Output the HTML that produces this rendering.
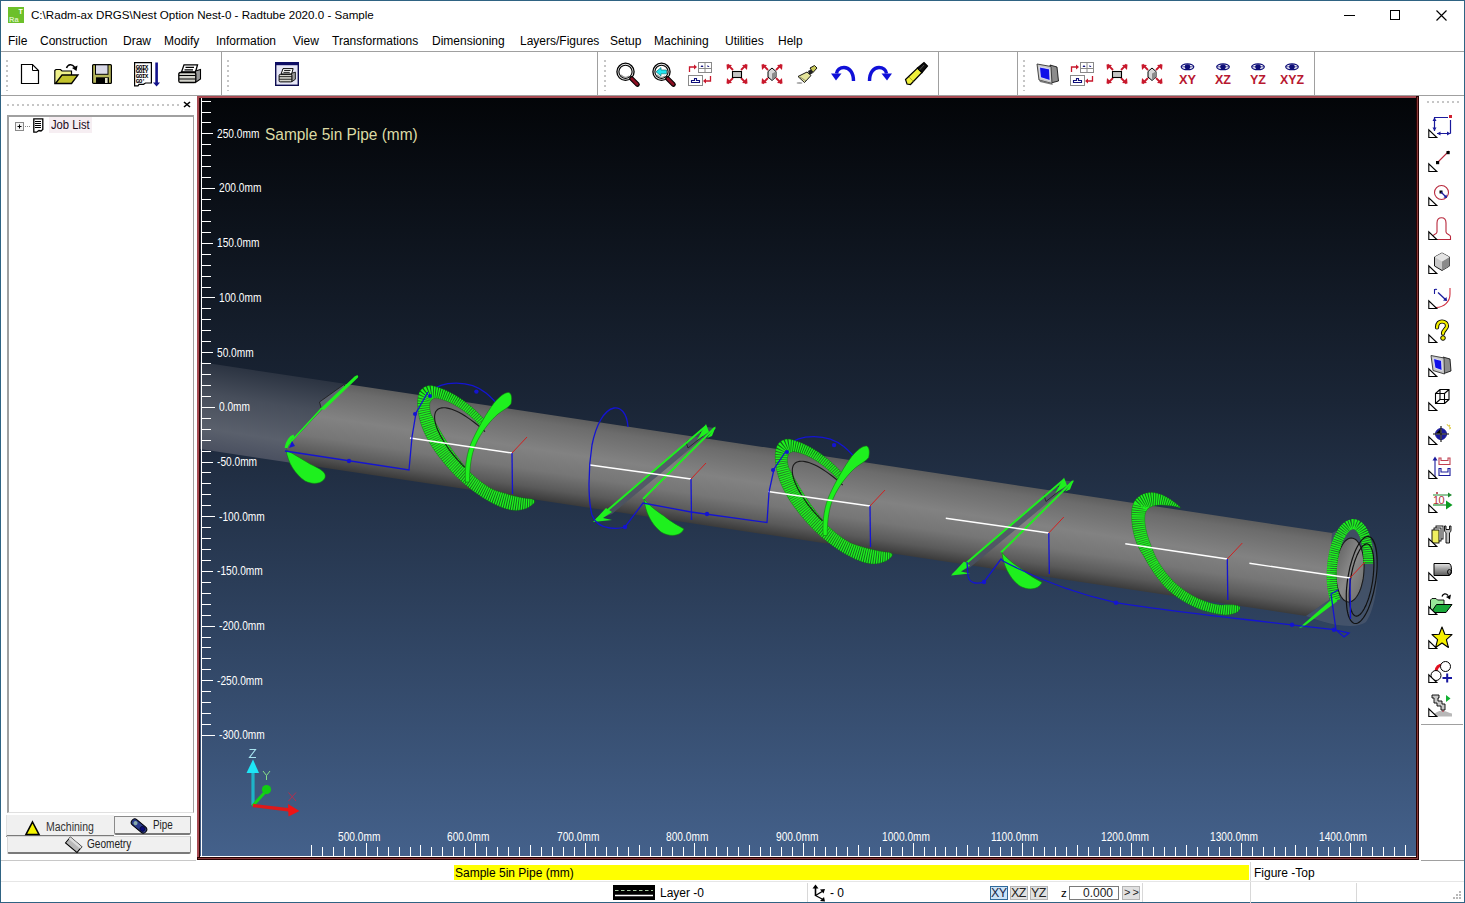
<!DOCTYPE html>
<html><head><meta charset="utf-8">
<style>
*{margin:0;padding:0;box-sizing:border-box}
html,body{width:1465px;height:903px;overflow:hidden;background:#fff;font-family:"Liberation Sans",sans-serif;color:#000}
.a{position:absolute}
.t{position:absolute;white-space:pre;font-size:12px;line-height:14px}
.hl{position:absolute;height:1px;background:#a0a0a0}
.vl{position:absolute;width:1px;background:#a0a0a0}
.grip{position:absolute;width:2px;background:repeating-linear-gradient(#c6c6c6 0 2px,transparent 2px 5px)}
.griph{position:absolute;height:2px;background:repeating-linear-gradient(90deg,#c6c6c6 0 2px,transparent 2px 5px)}
.rl{position:absolute;font-size:12.4px;line-height:13px;color:#fff;white-space:pre;transform-origin:0 0;transform:scaleX(0.82)}
svg{overflow:visible}
</style></head><body>
<div class="a" style="left:0;top:0;width:1465px;height:903px;border:1px solid #2f6383;"></div>

<!-- title bar -->
<svg class="a" style="left:8px;top:7px" width="16" height="16"><rect width="16" height="16" fill="#6cc02a"/><text x="1" y="15" font-family="Liberation Sans" font-size="7.5" font-weight="bold" fill="#d8f0c0">Ra</text><text x="10.5" y="7" font-family="Liberation Sans" font-size="7" font-weight="bold" fill="#fff">T</text></svg>
<div class="t" style="left:31px;top:8px;font-size:11.6px;color:#000">C:\Radm-ax DRGS\Nest Option Nest-0 - Radtube 2020.0 - Sample</div>
<div class="a" style="left:1344px;top:15px;width:11px;height:1px;background:#000"></div>
<div class="a" style="left:1390px;top:10px;width:10px;height:10px;border:1px solid #000"></div>
<svg class="a" style="left:1436px;top:10px" width="11" height="11"><path d="M0.5 0.5L10.5 10.5M10.5 0.5L0.5 10.5" stroke="#000" stroke-width="1.15"/></svg>

<!-- menu -->
<div class="t" style="left:8px;top:34px">File</div>
<div class="t" style="left:40px;top:34px">Construction</div>
<div class="t" style="left:123px;top:34px">Draw</div>
<div class="t" style="left:164px;top:34px">Modify</div>
<div class="t" style="left:216px;top:34px">Information</div>
<div class="t" style="left:293px;top:34px">View</div>
<div class="t" style="left:332px;top:34px">Transformations</div>
<div class="t" style="left:432px;top:34px">Dimensioning</div>
<div class="t" style="left:520px;top:34px">Layers/Figures</div>
<div class="t" style="left:610px;top:34px">Setup</div>
<div class="t" style="left:654px;top:34px">Machining</div>
<div class="t" style="left:725px;top:34px">Utilities</div>
<div class="t" style="left:778px;top:34px">Help</div>
<div class="hl" style="left:1px;top:51px;width:1463px"></div>

<!-- toolbar -->
<div class="hl" style="left:1px;top:95px;width:1463px"></div>
<div class="vl" style="left:221px;top:52px;height:43px"></div>
<div class="vl" style="left:597px;top:52px;height:43px"></div>
<div class="vl" style="left:938px;top:52px;height:43px"></div>
<div class="vl" style="left:1017px;top:52px;height:43px"></div>
<div class="vl" style="left:1314px;top:52px;height:43px"></div>
<div class="grip" style="left:6px;top:60px;height:31px"></div>
<div class="grip" style="left:227px;top:60px;height:31px"></div>
<div class="grip" style="left:604px;top:60px;height:31px"></div>
<div class="grip" style="left:1023px;top:60px;height:31px"></div>
<svg class="a" style="left:21px;top:64px" width="18" height="20" viewBox="0 0 18 20"><path d="M0.5,0.5H11.5L17.5,6.5V19.5H0.5Z" fill="#fff" stroke="#000" stroke-width="1.2"/><path d="M11.5,0.5V6.5H17.5" fill="none" stroke="#000" stroke-width="1"/></svg>
<svg class="a" style="left:54px;top:63px" width="25" height="21" viewBox="0 0 25 21"><path d="M0.8,7.5 L2,6.5 H6.5 L8,8 H17.5 V20.3 H0.8 Z" fill="#eef08a" stroke="#000" stroke-width="1.2"/><path d="M1.5,20.5 L8,12 H24 L17.5,20.5 Z" fill="#c2c22c" stroke="#000" stroke-width="1.3"/><path d="M12.5,5 C14,1 18,0.5 20.5,4" fill="none" stroke="#000" stroke-width="1.5"/><polygon points="18,5 23.5,2.5 22.5,8" fill="#000"/></svg>
<svg class="a" style="left:92px;top:64px" width="20" height="20" viewBox="0 0 20 20"><rect x="0.6" y="0.6" width="18.8" height="18.8" rx="1" fill="#b6b65c" stroke="#000" stroke-width="1.2"/><rect x="3.5" y="0.8" width="12.5" height="9.5" fill="#d9d9e8" stroke="#000" stroke-width="1"/><rect x="4" y="13.3" width="13" height="6.2" fill="#000"/><rect x="13" y="14" width="2.6" height="5" fill="#e6e6d0"/></svg>
<svg class="a" style="left:134px;top:62px" width="27" height="25" viewBox="0 0 27 25"><path d="M0.6,0.6H17.4V21H11.5L9.5,22.3H5L4,23.8H0.6Z" fill="#fff" stroke="#000" stroke-width="1.2"/><text x="1.8" y="6.5" font-family="Liberation Mono" font-weight="bold" font-size="6" letter-spacing="-0.6">GOIX</text><text x="1.8" y="11.3" font-family="Liberation Mono" font-weight="bold" font-size="6" letter-spacing="-0.6">GOIY</text><text x="1.8" y="16.1" font-family="Liberation Mono" font-weight="bold" font-size="6" letter-spacing="-0.6">GOIX</text><text x="1.8" y="20.9" font-family="Liberation Mono" font-weight="bold" font-size="6" letter-spacing="-0.6">GO'</text><rect x="21.3" y="0.5" width="2.6" height="20.5" fill="#12128c"/><polygon points="19,20.5 26,20.5 22.6,24.5" fill="#12128c"/></svg>
<svg class="a" style="left:178px;top:64px" width="23" height="19" viewBox="0 0 23 19"><g transform="translate(0,0)"><polygon points="6,0.8 19.5,0.8 17.5,8 3.5,8" fill="#fff" stroke="#000" stroke-width="1.3"/><path d="M7.5,3.3H16M6.5,5.8H15" stroke="#000" stroke-width="1.2"/><polygon points="17.5,7 22.5,5.5 22.5,15 17.5,18.5" fill="#9a9a9a" stroke="#000" stroke-width="1.1"/><rect x="0.8" y="8.5" width="17" height="10" rx="1.5" fill="#d4d4cc" stroke="#000" stroke-width="1.3"/><path d="M1,11.5H17.5M1,15H17.5" stroke="#000" stroke-width="1.1"/></g></svg>
<svg class="a" style="left:275px;top:62px" width="24" height="24" viewBox="0 0 24 24"><rect x="0.7" y="0.7" width="22.6" height="22.6" fill="#e6e6f6" stroke="#0c0c50" stroke-width="1.4"/><rect x="0" y="0" width="24" height="3.2" fill="#0c0c64"/><g transform="translate(3.5,6) scale(0.75)"><g transform="translate(0,0)"><polygon points="6,0.8 19.5,0.8 17.5,8 3.5,8" fill="#fff" stroke="#000" stroke-width="1.3"/><path d="M7.5,3.3H16M6.5,5.8H15" stroke="#000" stroke-width="1.2"/><polygon points="17.5,7 22.5,5.5 22.5,15 17.5,18.5" fill="#9a9a9a" stroke="#000" stroke-width="1.1"/><rect x="0.8" y="8.5" width="17" height="10" rx="1.5" fill="#d4d4cc" stroke="#000" stroke-width="1.3"/><path d="M1,11.5H17.5M1,15H17.5" stroke="#000" stroke-width="1.1"/></g></g></svg>
<svg class="a" style="left:615px;top:62px" width="25" height="25" viewBox="0 0 25 25"><circle cx="10.5" cy="9.8" r="8.6" fill="#e8e8e8" stroke="#000" stroke-width="1.3"/><circle cx="10.5" cy="9.8" r="6.6" fill="#fff" stroke="#000" stroke-width="1.1"/><path d="M6,13 A6,6 0 0 0 14,14" stroke="#999" stroke-width="1.2" fill="none"/><path d="M16.5,16.5 L22.5,22.5" stroke="#000" stroke-width="4.6" stroke-linecap="round"/><path d="M16.8,16.8 L22.2,22.2" stroke="#8a0f22" stroke-width="2.8" stroke-linecap="round"/></svg>
<svg class="a" style="left:651px;top:62px" width="25" height="25" viewBox="0 0 25 25"><circle cx="10.5" cy="9.8" r="8.6" fill="#e8e8e8" stroke="#000" stroke-width="1.3"/><circle cx="10.5" cy="9.8" r="6.6" fill="#fff" stroke="#000" stroke-width="1.1"/><path d="M6,13 A6,6 0 0 0 14,14" stroke="#999" stroke-width="1.2" fill="none"/><path d="M16.5,16.5 L22.5,22.5" stroke="#000" stroke-width="4.6" stroke-linecap="round"/><path d="M16.8,16.8 L22.2,22.2" stroke="#8a0f22" stroke-width="2.8" stroke-linecap="round"/><polygon points="5,9.8 10,5.5 10,8 15.5,8 15.5,11.8 10,11.8 10,14" fill="#22e4f0" stroke="#066" stroke-width="0.6"/></svg>
<svg class="a" style="left:688px;top:62px" width="25" height="24" viewBox="0 0 25 24"><rect x="10.5" y="0.5" width="13" height="10" fill="#fff" stroke="#8a8a8a" stroke-width="1"/><path d="M17,0.5V10.5M10.5,6.5H23.5" stroke="#8a8a8a" stroke-width="1"/><polygon points="12.5,5 14,3 15.5,5" fill="#10107a"/><polygon points="19.5,3 21.5,5 19.5,5" fill="#10107a"/><rect x="0.5" y="13.5" width="14" height="10" fill="#fff" stroke="#8a8a8a" stroke-width="1"/><path d="M3.5,20.5H11.5V18.5H8.5V16.5H6.5V18.5H3.5Z" fill="none" stroke="#10107a" stroke-width="1.1"/><path d="M1.5,10V5H6.5" fill="none" stroke="#c8182c" stroke-width="1.3"/><polygon points="6,2.5 9,5 6,7.5" fill="#c8182c"/><path d="M22.5,14V19H17.5" fill="none" stroke="#c8182c" stroke-width="1.3"/><polygon points="18,16.5 15,19 18,21.5" fill="#c8182c"/></svg>
<svg class="a" style="left:726px;top:64px" width="22" height="20" viewBox="0 0 22 20"><path d="M7,6 L1.5,0.5" stroke="#c8182c" stroke-width="1.8"/><path d="M15,6 L20.5,0.5" stroke="#c8182c" stroke-width="1.8"/><path d="M7,14 L1.5,19.5" stroke="#c8182c" stroke-width="1.8"/><path d="M15,14 L20.5,19.5" stroke="#c8182c" stroke-width="1.8"/><polygon points="0.5,0.5 6,1 1,6" fill="#c8182c"/><polygon points="21.5,0.5 16,1 21,6" fill="#c8182c"/><polygon points="0.5,19.5 6,19 1,14" fill="#c8182c"/><polygon points="21.5,19.5 16,19 21,14" fill="#c8182c"/><rect x="6.5" y="7.5" width="9" height="6" fill="#c4c4c4" stroke="#000" stroke-width="1.1"/></svg>
<svg class="a" style="left:761px;top:64px" width="22" height="20" viewBox="0 0 22 20"><path d="M7,6 L1.5,0.5" stroke="#c8182c" stroke-width="1.8"/><path d="M15,6 L20.5,0.5" stroke="#c8182c" stroke-width="1.8"/><path d="M7,14 L1.5,19.5" stroke="#c8182c" stroke-width="1.8"/><path d="M15,14 L20.5,19.5" stroke="#c8182c" stroke-width="1.8"/><polygon points="0.5,0.5 6,1 1,6" fill="#c8182c"/><polygon points="21.5,0.5 16,1 21,6" fill="#c8182c"/><polygon points="0.5,19.5 6,19 1,14" fill="#c8182c"/><polygon points="21.5,19.5 16,19 21,14" fill="#c8182c"/><polygon points="11,4 15,7.5 15,13 11,16.5 7,13 7,7.5" fill="#d8d8d8" stroke="#000" stroke-width="1"/><polygon points="11,9.5 15,7.5 15,13 11,16.5" fill="#8c8c8c"/></svg>
<svg class="a" style="left:796px;top:65px" width="22" height="19" viewBox="0 0 22 19"><ellipse cx="3.5" cy="18" rx="3" ry="1" fill="#aaa"/><polygon points="14,3 18.5,0.5 21,3 17,7.5" fill="#c8c858" stroke="#000" stroke-width="0.9"/><polygon points="12,6 15,4.5 17,8 13.5,10" fill="#222"/><polygon points="2,11.5 11,7 15,10.5 8.5,17.5" fill="#e4e49a" stroke="#000" stroke-width="0.9"/><path d="M4,12 L10,16" stroke="#555" stroke-width="0.6"/></svg>
<svg class="a" style="left:831px;top:65px" width="25" height="17" viewBox="0 0 25 17"><path d="M22.5,16 C22.5,7 18,2.5 13,2.5 C9,2.5 6,5 5.5,8.5" fill="none" stroke="#1010d8" stroke-width="3.4"/><polygon points="0,8.5 10.5,8.5 5,15.5" fill="#1010d8"/></svg>
<svg class="a" style="left:867px;top:65px" width="25" height="17" viewBox="0 0 25 17"><g transform="translate(25,0) scale(-1,1)"><path d="M22.5,16 C22.5,7 18,2.5 13,2.5 C9,2.5 6,5 5.5,8.5" fill="none" stroke="#1010d8" stroke-width="3.4"/><polygon points="0,8.5 10.5,8.5 5,15.5" fill="#1010d8"/></g></svg>
<svg class="a" style="left:905px;top:62px" width="23" height="24" viewBox="0 0 23 24"><polygon points="0.5,17.5 12.5,6 17,10.5 5.5,22.5 2,22" fill="#f0f03a" stroke="#000" stroke-width="1.2"/><polygon points="12.5,6 19,0.5 22.5,4 17,10.5" fill="#111" stroke="#000" stroke-width="1.2"/><path d="M19,3 L14.5,8" stroke="#888" stroke-width="0.5"/><path d="M4,15 L8.5,19.5" stroke="#8a8a20" stroke-width="0.6"/></svg>
<svg class="a" style="left:1036px;top:62px" width="24" height="24" viewBox="0 0 24 24"><polygon points="14,3 21,5 22.5,19 15,21" fill="#8c8c8c" stroke="#000" stroke-width="0.8"/><polygon points="1,2 15,4.5 16,21.5 3,18" fill="#c8c8c8" stroke="#333" stroke-width="0.9"/><polygon points="3.5,5 13.5,7 14,18.5 4.5,15.5" fill="#1010e8" stroke="#fff" stroke-width="0.7"/><polygon points="3,18 16,21.5 17,23 4,20" fill="#777"/></svg>
<svg class="a" style="left:1070px;top:62px" width="25" height="24" viewBox="0 0 25 24"><rect x="10.5" y="0.5" width="13" height="10" fill="#fff" stroke="#8a8a8a" stroke-width="1"/><path d="M17,0.5V10.5M10.5,6.5H23.5" stroke="#8a8a8a" stroke-width="1"/><polygon points="12.5,5 14,3 15.5,5" fill="#10107a"/><polygon points="19.5,3 21.5,5 19.5,5" fill="#10107a"/><rect x="0.5" y="13.5" width="14" height="10" fill="#fff" stroke="#8a8a8a" stroke-width="1"/><path d="M3.5,20.5H11.5V18.5H8.5V16.5H6.5V18.5H3.5Z" fill="none" stroke="#10107a" stroke-width="1.1"/><path d="M1.5,10V5H6.5" fill="none" stroke="#c8182c" stroke-width="1.3"/><polygon points="6,2.5 9,5 6,7.5" fill="#c8182c"/><path d="M22.5,14V19H17.5" fill="none" stroke="#c8182c" stroke-width="1.3"/><polygon points="18,16.5 15,19 18,21.5" fill="#c8182c"/></svg>
<svg class="a" style="left:1106px;top:64px" width="22" height="20" viewBox="0 0 22 20"><path d="M7,6 L1.5,0.5" stroke="#c8182c" stroke-width="1.8"/><path d="M15,6 L20.5,0.5" stroke="#c8182c" stroke-width="1.8"/><path d="M7,14 L1.5,19.5" stroke="#c8182c" stroke-width="1.8"/><path d="M15,14 L20.5,19.5" stroke="#c8182c" stroke-width="1.8"/><polygon points="0.5,0.5 6,1 1,6" fill="#c8182c"/><polygon points="21.5,0.5 16,1 21,6" fill="#c8182c"/><polygon points="0.5,19.5 6,19 1,14" fill="#c8182c"/><polygon points="21.5,19.5 16,19 21,14" fill="#c8182c"/><rect x="6.5" y="7.5" width="9" height="6" fill="#c4c4c4" stroke="#000" stroke-width="1.1"/></svg>
<svg class="a" style="left:1141px;top:64px" width="22" height="20" viewBox="0 0 22 20"><path d="M7,6 L1.5,0.5" stroke="#c8182c" stroke-width="1.8"/><path d="M15,6 L20.5,0.5" stroke="#c8182c" stroke-width="1.8"/><path d="M7,14 L1.5,19.5" stroke="#c8182c" stroke-width="1.8"/><path d="M15,14 L20.5,19.5" stroke="#c8182c" stroke-width="1.8"/><polygon points="0.5,0.5 6,1 1,6" fill="#c8182c"/><polygon points="21.5,0.5 16,1 21,6" fill="#c8182c"/><polygon points="0.5,19.5 6,19 1,14" fill="#c8182c"/><polygon points="21.5,19.5 16,19 21,14" fill="#c8182c"/><polygon points="11,4 15,7.5 15,13 11,16.5 7,13 7,7.5" fill="#d8d8d8" stroke="#000" stroke-width="1"/><polygon points="11,9.5 15,7.5 15,13 11,16.5" fill="#8c8c8c"/></svg>
<svg class="a" style="left:1179px;top:63px" width="17" height="21" viewBox="0 0 17 21"><g transform="translate(0.0,0)"><ellipse cx="8.5" cy="3.8" rx="6.3" ry="2.9" fill="#fff" stroke="#0e0e78" stroke-width="1.2"/><ellipse cx="8.5" cy="3.8" rx="2.8" ry="2.6" fill="#0e0e78"/><path d="M2.2,3.8H14.8" stroke="#0e0e78" stroke-width="0.7"/></g><text x="8.5" y="20.5" text-anchor="middle" font-family="Liberation Sans" font-weight="bold" font-size="12.5" fill="#b81830" textLength="17" lengthAdjust="spacingAndGlyphs">XY</text></svg>
<svg class="a" style="left:1215px;top:63px" width="16" height="21" viewBox="0 0 16 21"><g transform="translate(-0.5,0)"><ellipse cx="8.5" cy="3.8" rx="6.3" ry="2.9" fill="#fff" stroke="#0e0e78" stroke-width="1.2"/><ellipse cx="8.5" cy="3.8" rx="2.8" ry="2.6" fill="#0e0e78"/><path d="M2.2,3.8H14.8" stroke="#0e0e78" stroke-width="0.7"/></g><text x="8.0" y="20.5" text-anchor="middle" font-family="Liberation Sans" font-weight="bold" font-size="12.5" fill="#b81830" textLength="16" lengthAdjust="spacingAndGlyphs">XZ</text></svg>
<svg class="a" style="left:1250px;top:63px" width="16" height="21" viewBox="0 0 16 21"><g transform="translate(-0.5,0)"><ellipse cx="8.5" cy="3.8" rx="6.3" ry="2.9" fill="#fff" stroke="#0e0e78" stroke-width="1.2"/><ellipse cx="8.5" cy="3.8" rx="2.8" ry="2.6" fill="#0e0e78"/><path d="M2.2,3.8H14.8" stroke="#0e0e78" stroke-width="0.7"/></g><text x="8.0" y="20.5" text-anchor="middle" font-family="Liberation Sans" font-weight="bold" font-size="12.5" fill="#b81830" textLength="16" lengthAdjust="spacingAndGlyphs">YZ</text></svg>
<svg class="a" style="left:1280px;top:63px" width="24" height="21" viewBox="0 0 24 21"><g transform="translate(3.5,0)"><ellipse cx="8.5" cy="3.8" rx="6.3" ry="2.9" fill="#fff" stroke="#0e0e78" stroke-width="1.2"/><ellipse cx="8.5" cy="3.8" rx="2.8" ry="2.6" fill="#0e0e78"/><path d="M2.2,3.8H14.8" stroke="#0e0e78" stroke-width="0.7"/></g><text x="12.0" y="20.5" text-anchor="middle" font-family="Liberation Sans" font-weight="bold" font-size="12.5" fill="#b81830" textLength="24" lengthAdjust="spacingAndGlyphs">XYZ</text></svg>

<!-- left panel -->
<div class="griph" style="left:7px;top:104px;width:172px"></div>
<svg class="a" style="left:183px;top:101px" width="8" height="7"><path d="M1 1L7 6M7 1L1 6" stroke="#000" stroke-width="1.6"/></svg>
<div class="a" style="left:7px;top:115px;width:187px;height:698px;border-top:2px solid #a0a0a0;border-left:2px solid #a0a0a0;border-right:1px solid #a0a0a0;border-bottom:1px solid #e0e0e0;background:#fff"></div>
<svg class="a" style="left:15px;top:122px" width="16" height="9"><rect x="0.5" y="0.5" width="8" height="8" fill="#f4f4f4" stroke="#8a8a8a"/><path d="M2.5,4.5H6.5M4.5,2.5V6.5" stroke="#000" stroke-width="1"/><path d="M10,4.5H11M12,4.5H13M14,4.5H15" stroke="#888" stroke-width="1"/></svg>
<svg class="a" style="left:33px;top:118px" width="11" height="15"><path d="M0.8,0.8H9.8V11.5L8,13L6,12.5L3.5,14.2H0.8Z" fill="#fff" stroke="#000" stroke-width="1.3"/><path d="M2,3.5H8M2,5.5H8M2,7.5H8M2,9.5H8" stroke="#000" stroke-width="1" shape-rendering="crispEdges"/></svg>
<div class="a" style="left:49px;top:117px;width:43px;height:16px;background:#f6eef2"></div>
<div class="t" style="left:51px;top:118px;font-size:12px;line-height:14px;color:#1a0a1a;transform-origin:0 0;transform:scaleX(0.935)">Job List</div>
<!-- tabs -->
<div class="a" style="left:6px;top:815px;width:108px;height:22px;background:#f0f0f0;border-bottom:2px solid #7a7a7a;border-left:1px solid #e0e0e0"></div>
<svg class="a" style="left:25px;top:821px" width="15" height="15"><polygon points="7.5,1 14,13.5 1,13.5" fill="#f4f400" stroke="#000" stroke-width="1.6" stroke-linejoin="miter"/></svg>
<div class="t" style="left:46px;top:820px;font-size:12px;line-height:14px;color:#333;transform-origin:0 0;transform:scaleX(0.875)">Machining</div>
<div class="a" style="left:114px;top:816px;width:77px;height:19px;background:#f0f0f0;border:1px solid #8a8a8a;border-bottom:2px solid #7a7a7a;border-radius:0 0 2px 2px"></div>
<svg class="a" style="left:131px;top:818px" width="16" height="16"><g transform="rotate(40 8 8)"><rect x="-1" y="4.5" width="18" height="7" rx="3.5" fill="#2a3a8a" stroke="#000" stroke-width="1"/><circle cx="3.5" cy="8" r="2" fill="#8aa"/><circle cx="12.5" cy="8" r="2.5" fill="#0a0a7a" stroke="#000" stroke-width="0.5"/></g></svg>
<div class="t" style="left:153px;top:818px;font-size:12px;line-height:14px;color:#222;transform-origin:0 0;transform:scaleX(0.82)">Pipe</div>
<div class="a" style="left:7px;top:836px;width:184px;height:18px;background:#f0f0f0;border:1px solid #d8d8d8;border-bottom:2px solid #7a7a7a;border-right:1px solid #9a9a9a;border-radius:0 0 2px 2px"></div>
<svg class="a" style="left:66px;top:837px" width="15" height="16"><g transform="rotate(40 7.5 8)"><rect x="0" y="4" width="15" height="7.5" fill="#b8b8b8" stroke="#000" stroke-width="1"/><rect x="0" y="4" width="15" height="2.5" fill="#dcdcdc"/></g></svg>
<div class="t" style="left:87px;top:837px;font-size:12px;line-height:14px;color:#222;transform-origin:0 0;transform:scaleX(0.84)">Geometry</div>

<div class="hl" style="left:1px;top:860px;width:195px;background:#c8c8c8"></div>

<!-- viewport -->
<div class="a" style="left:197px;top:96px;width:1222px;height:764px;background:#2a0303"></div>
<div class="a" style="left:197px;top:96px;width:1219px;height:2px;background:#a84a52"></div>
<div class="a" style="left:197px;top:96px;width:2px;height:761px;background:#a84a52"></div>
<div class="a" style="left:1417px;top:97px;width:1px;height:762px;background:#8a3a3a"></div>
<div class="a" style="left:198px;top:858px;width:1220px;height:1px;background:#8a3a3a"></div>
<div class="a" style="left:200px;top:98px;width:1216px;height:759px;background:linear-gradient(#030508 0%,#1a2536 40%,#44618b 100%)"></div>
<svg class="a" style="left:0;top:0;overflow:hidden" width="1465" height="903">
<defs><clipPath id="vp"><rect x="200" y="98" width="1216" height="759"/></clipPath></defs>
<g clip-path="url(#vp)">
<defs>
<linearGradient id="pg" gradientUnits="userSpaceOnUse" x1="700" y1="437.5" x2="687.1" y2="522.6"><stop offset="0" stop-color="#5e5e5e"/><stop offset="0.1" stop-color="#6c6c6c"/><stop offset="0.42" stop-color="#828282"/><stop offset="0.66" stop-color="#767676"/><stop offset="0.86" stop-color="#5a5a5a"/><stop offset="1" stop-color="#3a3a3a"/></linearGradient>
<linearGradient id="tg" gradientUnits="userSpaceOnUse" x1="250" y1="370" x2="237" y2="455">
<stop offset="0" stop-color="#2c3442"/><stop offset="0.35" stop-color="#474e5b"/><stop offset="0.75" stop-color="#5a606c"/><stop offset="1" stop-color="#4a5060"/>
</linearGradient>
</defs>
<!-- translucent left stub -->
<polygon points="200,362 346,384 286,448 296,463.5 200,449" fill="url(#tg)"/>
<!-- solid pipe -->
<polygon points="346,384 1332,533 1329,600 1306,616 296,463.5 286,448" fill="url(#pg)"/>

<polygon points="319.5,402 344,384.5 346,388 321.5,409.5" fill="#5c626e" stroke="#1a1a1a" stroke-width="0.8"/>
<polyline points="286.0,447.0 322.0,408.0" fill="none" stroke="#1ef01e" stroke-width="1.8" />
<path d="M320,409 L353,378 C356,375 359,374 358,377.5 L324,410 Z" fill="#1ef01e"/>
<path d="M286,450 C288,463 295,474 305,481 C313,485 322,484 325,478 C327,472 320,469 310,464 C300,458 292,453 286,450 Z" fill="#1ef01e" stroke="#0f7a10" stroke-width="0.6"/>
<path d="M286,448 C288,440 291,437 294,436" fill="none" stroke="#1ef01e" stroke-width="3"/>
<polygon points="289,448 292,441 295,446" fill="#1414d2"/>
<path d="M430,392 C442,380 470,380 486,393 C492,398 496,402 499,407" fill="none" stroke="#1414d2" stroke-width="1.3"/>
<circle cx="476.4" cy="391.6" r="2.2" fill="#1414d2"/>
<clipPath id="hb1"><path d="M484,419 C470,403 448,388 430,385.5 C420,386 416,395 418,410 C420,430 432,450 450,470 C465,487 490,505 510,510 C522,512 532,507 535.5,501 L532,499 C520,498 505,494 493,489.6 C480,482 470,474 459,459 C449,446 442,435 431,414 C428,404 430,399 436,398 C450,400 468,412 480.6,426.3 Z"/></clipPath><path d="M484,419 C470,403 448,388 430,385.5 C420,386 416,395 418,410 C420,430 432,450 450,470 C465,487 490,505 510,510 C522,512 532,507 535.5,501 L532,499 C520,498 505,494 493,489.6 C480,482 470,474 459,459 C449,446 442,435 431,414 C428,404 430,399 436,398 C450,400 468,412 480.6,426.3 Z" fill="#0f7a10" fill-opacity="0.75"/><path d="M482,423 C468,406 448,392 432,392 C422,393 422,405 425,415 C430,437 442,455 455,467 C475,487 500,500 534,500" fill="none" stroke="#1ef01e" stroke-width="24" stroke-dasharray="1.4 0.8" clip-path="url(#hb1)"/><path d="M484,419 C470,403 448,388 430,385.5 C420,386 416,395 418,410 C420,430 432,450 450,470 C465,487 490,505 510,510 C522,512 532,507 535.5,501 L532,499 C520,498 505,494 493,489.6 C480,482 470,474 459,459 C449,446 442,435 431,414 C428,404 430,399 436,398 C450,400 468,412 480.6,426.3 Z" fill="none" stroke="#0d700d" stroke-width="0.5" stroke-opacity="0.6"/>
<path d="M464.8,467.4 L462.0,464.6 L459.3,461.7 L456.7,458.8 L454.2,455.8 L451.7,452.8 L449.4,449.8 L447.3,446.8 L445.3,443.8 L443.4,440.8 L441.7,437.9 L440.1,435.1 L438.8,432.3 L437.6,429.7 L436.6,427.1 L435.8,424.6 L435.2,422.3 L434.8,420.1 L434.6,418.1 L434.6,416.2 L434.8,414.5 L435.2,413.0 L435.8,411.6 L436.6,410.5 L437.6,409.5 L438.8,408.8 L440.1,408.2 L441.7,407.9 L443.4,407.7 L445.3,407.8 L447.3,408.1 L449.5,408.6 L451.8,409.3 L454.2,410.2 L456.7,411.3 L459.3,412.6 L462.0,414.1 L464.8,415.8 L467.6,417.6 L470.5,419.6 L473.4,421.7 L476.3,424.0 L479.2,426.4 L482.1,429.0 L485.0,431.6" fill="none" stroke="#1a1a1a" stroke-width="1.1"/>
<path d="M509,392.5 C505,392 499,397 494,403 C487,412 478,428 472,441 C467,452 464.5,466 465.5,482 L469.5,482 C469.5,467 471.5,454 475.5,445 C481,432 491,420 498,414 C503,410 508,408 511,404 C512,399 512,394 509,392.5 Z" fill="#1ef01e" stroke="#0f7a10" stroke-width="0.6"/>
<polygon points="598,519 706,427 715,428 612,514" fill="#4a5263" fill-opacity="0.8"/>
<polygon points="686,442 700,432 703,436 688,448" fill="none" stroke="#202020" stroke-width="0.8"/>
<polyline points="595.0,521.0 706.0,426.0" fill="none" stroke="#1ef01e" stroke-width="2" />
<polyline points="643.0,499.0 715.0,427.5" fill="none" stroke="#1ef01e" stroke-width="2" />
<polygon points="593,522 606,508 612,512 603,518 612,520" fill="#1ef01e"/>
<polygon points="697,440 706,424 709,432" fill="#1ef01e"/>
<polygon points="707,438 716,426 712,436" fill="#1ef01e"/>
<path d="M644,499 C645,511 651,524 661,532 C669,537 680,537 684,529 C679,526 671,522 664,516 C655,510 649,505 644,499 Z" fill="#1ef01e" stroke="#0f7a10" stroke-width="0.6"/>
<g transform="translate(357.7,53.5)"><path d="M430,392 C442,380 470,380 486,393 C492,398 496,402 499,407" fill="none" stroke="#1414d2" stroke-width="1.3"/>
<circle cx="476.4" cy="391.6" r="2.2" fill="#1414d2"/>
<clipPath id="hb2"><path d="M484,419 C470,403 448,388 430,385.5 C420,386 416,395 418,410 C420,430 432,450 450,470 C465,487 490,505 510,510 C522,512 532,507 535.5,501 L532,499 C520,498 505,494 493,489.6 C480,482 470,474 459,459 C449,446 442,435 431,414 C428,404 430,399 436,398 C450,400 468,412 480.6,426.3 Z"/></clipPath><path d="M484,419 C470,403 448,388 430,385.5 C420,386 416,395 418,410 C420,430 432,450 450,470 C465,487 490,505 510,510 C522,512 532,507 535.5,501 L532,499 C520,498 505,494 493,489.6 C480,482 470,474 459,459 C449,446 442,435 431,414 C428,404 430,399 436,398 C450,400 468,412 480.6,426.3 Z" fill="#0f7a10" fill-opacity="0.75"/><path d="M482,423 C468,406 448,392 432,392 C422,393 422,405 425,415 C430,437 442,455 455,467 C475,487 500,500 534,500" fill="none" stroke="#1ef01e" stroke-width="24" stroke-dasharray="1.4 0.8" clip-path="url(#hb2)"/><path d="M484,419 C470,403 448,388 430,385.5 C420,386 416,395 418,410 C420,430 432,450 450,470 C465,487 490,505 510,510 C522,512 532,507 535.5,501 L532,499 C520,498 505,494 493,489.6 C480,482 470,474 459,459 C449,446 442,435 431,414 C428,404 430,399 436,398 C450,400 468,412 480.6,426.3 Z" fill="none" stroke="#0d700d" stroke-width="0.5" stroke-opacity="0.6"/>
<path d="M464.8,467.4 L462.0,464.6 L459.3,461.7 L456.7,458.8 L454.2,455.8 L451.7,452.8 L449.4,449.8 L447.3,446.8 L445.3,443.8 L443.4,440.8 L441.7,437.9 L440.1,435.1 L438.8,432.3 L437.6,429.7 L436.6,427.1 L435.8,424.6 L435.2,422.3 L434.8,420.1 L434.6,418.1 L434.6,416.2 L434.8,414.5 L435.2,413.0 L435.8,411.6 L436.6,410.5 L437.6,409.5 L438.8,408.8 L440.1,408.2 L441.7,407.9 L443.4,407.7 L445.3,407.8 L447.3,408.1 L449.5,408.6 L451.8,409.3 L454.2,410.2 L456.7,411.3 L459.3,412.6 L462.0,414.1 L464.8,415.8 L467.6,417.6 L470.5,419.6 L473.4,421.7 L476.3,424.0 L479.2,426.4 L482.1,429.0 L485.0,431.6" fill="none" stroke="#1a1a1a" stroke-width="1.1"/>
<path d="M509,392.5 C505,392 499,397 494,403 C487,412 478,428 472,441 C467,452 464.5,466 465.5,482 L469.5,482 C469.5,467 471.5,454 475.5,445 C481,432 491,420 498,414 C503,410 508,408 511,404 C512,399 512,394 509,392.5 Z" fill="#1ef01e" stroke="#0f7a10" stroke-width="0.6"/></g>
<g transform="translate(358,53.5)"><polygon points="598,519 706,427 715,428 612,514" fill="#4a5263" fill-opacity="0.8"/>
<polygon points="686,442 700,432 703,436 688,448" fill="none" stroke="#202020" stroke-width="0.8"/>
<polyline points="595.0,521.0 706.0,426.0" fill="none" stroke="#1ef01e" stroke-width="2" />
<polyline points="643.0,499.0 715.0,427.5" fill="none" stroke="#1ef01e" stroke-width="2" />
<polygon points="593,522 606,508 612,512 603,518 612,520" fill="#1ef01e"/>
<polygon points="697,440 706,424 709,432" fill="#1ef01e"/>
<polygon points="707,438 716,426 712,436" fill="#1ef01e"/>
<path d="M644,499 C645,511 651,524 661,532 C669,537 680,537 684,529 C679,526 671,522 664,516 C655,510 649,505 644,499 Z" fill="#1ef01e" stroke="#0f7a10" stroke-width="0.6"/></g>
<clipPath id="hb3"><path d="M1181,508 C1172,499 1160,492 1150,492.5 C1140,493 1132,500 1131.6,512 C1131,530 1136,545 1143,555 C1150,568 1158,580 1168,590 C1185,605 1205,613 1225,615 C1235,615 1241,611 1240,607 C1236,604 1230,605 1220,605 C1205,603 1190,596 1175,583 C1165,573 1156,560 1152,548 C1147,535 1144,525 1145,515 C1146,508 1152,505 1160,505 C1168,505 1175,506 1181,508 Z"/></clipPath><path d="M1181,508 C1172,499 1160,492 1150,492.5 C1140,493 1132,500 1131.6,512 C1131,530 1136,545 1143,555 C1150,568 1158,580 1168,590 C1185,605 1205,613 1225,615 C1235,615 1241,611 1240,607 C1236,604 1230,605 1220,605 C1205,603 1190,596 1175,583 C1165,573 1156,560 1152,548 C1147,535 1144,525 1145,515 C1146,508 1152,505 1160,505 C1168,505 1175,506 1181,508 Z" fill="#0f7a10" fill-opacity="0.75"/><path d="M1180,507 C1165,497 1148,495 1139,505 C1135,520 1140,545 1152,565 C1170,592 1200,609 1240,609" fill="none" stroke="#1ef01e" stroke-width="26" stroke-dasharray="1.4 0.8" clip-path="url(#hb3)"/><path d="M1181,508 C1172,499 1160,492 1150,492.5 C1140,493 1132,500 1131.6,512 C1131,530 1136,545 1143,555 C1150,568 1158,580 1168,590 C1185,605 1205,613 1225,615 C1235,615 1241,611 1240,607 C1236,604 1230,605 1220,605 C1205,603 1190,596 1175,583 C1165,573 1156,560 1152,548 C1147,535 1144,525 1145,515 C1146,508 1152,505 1160,505 C1168,505 1175,506 1181,508 Z" fill="none" stroke="#0d700d" stroke-width="0.5" stroke-opacity="0.6"/>
<path d="M1332,533 C1345,525 1366,528 1374,545 C1380,565 1378,605 1366,622 C1355,630 1330,625 1306,616 L1329,600 Z" fill="#566072" fill-opacity="0.55"/>
<defs><linearGradient id="holeg" x1="0" y1="0" x2="1" y2="1"><stop offset="0" stop-color="#5a5a5a"/><stop offset="0.5" stop-color="#8a8a8a"/><stop offset="1" stop-color="#6a6a6a"/></linearGradient></defs>
<path d="M1348.3,602.0 L1347.4,601.8 L1346.4,601.5 L1345.5,601.1 L1344.5,600.5 L1343.6,599.8 L1342.8,598.9 L1342.0,597.9 L1341.2,596.7 L1340.4,595.4 L1339.7,594.0 L1339.1,592.5 L1338.5,590.8 L1338.0,589.1 L1337.5,587.3 L1337.1,585.3 L1336.7,583.4 L1336.4,581.3 L1336.2,579.2 L1336.0,577.0 L1335.9,574.8 L1335.9,572.6 L1336.0,570.4 L1336.1,568.2 L1336.3,565.9 L1336.5,563.7 L1336.8,561.6 L1337.2,559.4 L1337.7,557.3 L1338.2,555.3 L1338.7,553.4 L1339.3,551.5 L1340.0,549.7 L1340.7,548.1 L1341.5,546.5 L1342.3,545.0 L1343.1,543.7 L1344.0,542.5 L1344.9,541.4 L1345.8,540.5 L1346.8,539.7 L1347.8,539.1 L1348.7,538.6 L1349.7,538.3 L1350.7,538.1 L1351.7,538.0 L1352.6,538.2 L1353.6,538.5 L1354.5,538.9 L1355.5,539.5 L1356.4,540.2 L1357.2,541.1 L1358.0,542.1 L1358.8,543.3 L1359.6,544.6 L1360.3,546.0 L1360.9,547.5 L1361.5,549.2 L1362.0,550.9 L1362.5,552.7 L1362.9,554.7 L1363.3,556.6 L1363.6,558.7 L1363.8,560.8 L1364.0,563.0 L1364.1,565.2 L1364.1,567.4 L1364.0,569.6 L1363.9,571.8 L1363.7,574.1 L1363.5,576.3 L1363.2,578.4 L1362.8,580.6 L1362.3,582.7 L1361.8,584.7 L1361.3,586.6 L1360.7,588.5 L1360.0,590.3 L1359.3,591.9 L1358.5,593.5 L1357.7,595.0 L1356.9,596.3 L1356.0,597.5 L1355.1,598.6 L1354.2,599.5 L1353.2,600.3 L1352.2,600.9 L1351.3,601.4 L1350.3,601.7 L1349.3,601.9 L1348.3,602.0" fill="url(#holeg)" stroke="#1a1a1a" stroke-width="1.1"/>
<path d="M1335.5,600.6 L1334.8,598.4 L1334.1,596.1 L1333.5,593.7 L1333.0,591.1 L1332.5,588.4 L1332.2,585.7 L1331.9,582.8 L1331.8,579.8 L1331.7,576.8 L1331.7,573.8 L1331.8,570.7 L1332.0,567.6 L1332.3,564.5 L1332.6,561.5 L1333.1,558.4 L1333.6,555.4 L1334.2,552.5 L1334.9,549.7 L1335.7,546.9 L1336.5,544.3 L1337.5,541.7 L1338.4,539.3 L1339.5,537.0 L1340.5,534.9 L1341.7,533.0 L1342.8,531.2 L1344.0,529.6 L1345.3,528.2 L1346.5,527.0 L1347.8,526.0 L1349.1,525.2 L1350.4,524.7 L1351.7,524.3 L1353.0,524.1 L1354.2,524.2 L1355.5,524.5 L1356.7,525.0 L1357.9,525.7 L1359.0,526.6 L1360.1,527.8 L1361.2,529.1 L1362.2,530.6 L1363.1,532.3 L1364.0,534.2 L1364.8,536.3 L1365.5,538.5 L1366.2,540.9 L1366.7,543.3 L1367.2,546.0 L1367.6,548.7 L1367.9,551.5 L1368.2,554.4 L1368.3,557.4 L1368.3,560.4 L1368.3,563.5" fill="none" stroke="#0f7a10" stroke-width="10" stroke-opacity="0.6"/>
<path d="M1335.5,600.6 L1334.8,598.4 L1334.1,596.1 L1333.5,593.7 L1333.0,591.1 L1332.5,588.4 L1332.2,585.7 L1331.9,582.8 L1331.8,579.8 L1331.7,576.8 L1331.7,573.8 L1331.8,570.7 L1332.0,567.6 L1332.3,564.5 L1332.6,561.5 L1333.1,558.4 L1333.6,555.4 L1334.2,552.5 L1334.9,549.7 L1335.7,546.9 L1336.5,544.3 L1337.5,541.7 L1338.4,539.3 L1339.5,537.0 L1340.5,534.9 L1341.7,533.0 L1342.8,531.2 L1344.0,529.6 L1345.3,528.2 L1346.5,527.0 L1347.8,526.0 L1349.1,525.2 L1350.4,524.7 L1351.7,524.3 L1353.0,524.1 L1354.2,524.2 L1355.5,524.5 L1356.7,525.0 L1357.9,525.7 L1359.0,526.6 L1360.1,527.8 L1361.2,529.1 L1362.2,530.6 L1363.1,532.3 L1364.0,534.2 L1364.8,536.3 L1365.5,538.5 L1366.2,540.9 L1366.7,543.3 L1367.2,546.0 L1367.6,548.7 L1367.9,551.5 L1368.2,554.4 L1368.3,557.4 L1368.3,560.4 L1368.3,563.5" fill="none" stroke="#1ef01e" stroke-width="10" stroke-dasharray="1.4 0.8"/>
<path d="M1354.8,623.5 L1353.9,623.2 L1353.0,622.7 L1352.1,622.1 L1351.3,621.2 L1350.5,620.1 L1349.8,618.8 L1349.1,617.3 L1348.5,615.7 L1348.0,613.9 L1347.5,611.9 L1347.1,609.7 L1346.8,607.5 L1346.6,605.0 L1346.4,602.5 L1346.3,599.8 L1346.3,597.1 L1346.3,594.2 L1346.4,591.3 L1346.6,588.4 L1346.9,585.4 L1347.2,582.4 L1347.6,579.3 L1348.1,576.3 L1348.7,573.3 L1349.3,570.3 L1349.9,567.4 L1350.7,564.5 L1351.5,561.7 L1352.3,559.0 L1353.2,556.4 L1354.1,553.9 L1355.0,551.5 L1356.0,549.3 L1357.0,547.2 L1358.1,545.3 L1359.1,543.6 L1360.2,542.0 L1361.3,540.6 L1362.4,539.4 L1363.4,538.4 L1364.5,537.6 L1365.6,537.0 L1366.6,536.7 L1367.6,536.5 L1368.6,536.5 L1369.5,536.8 L1370.4,537.3 L1371.3,537.9 L1372.1,538.8 L1372.9,539.9 L1373.6,541.2 L1374.3,542.7 L1374.9,544.3 L1375.4,546.1 L1375.9,548.1 L1376.3,550.3 L1376.6,552.5 L1376.8,555.0 L1377.0,557.5 L1377.1,560.2 L1377.1,562.9 L1377.1,565.8 L1377.0,568.7 L1376.8,571.6 L1376.5,574.6 L1376.2,577.6 L1375.8,580.7 L1375.3,583.7 L1374.7,586.7 L1374.1,589.7 L1373.5,592.6 L1372.7,595.5 L1371.9,598.3 L1371.1,601.0 L1370.2,603.6 L1369.3,606.1 L1368.4,608.5 L1367.4,610.7 L1366.4,612.8 L1365.3,614.7 L1364.3,616.4 L1363.2,618.0 L1362.1,619.4 L1361.0,620.6 L1360.0,621.6 L1358.9,622.4 L1357.8,623.0 L1356.8,623.3 L1355.8,623.5 L1354.8,623.5" fill="none" stroke="#111" stroke-width="1.2"/>
<path d="M1355.9,616.1 L1355.1,615.8 L1354.4,615.5 L1353.8,614.9 L1353.1,614.2 L1352.5,613.3 L1352.0,612.2 L1351.5,611.0 L1351.0,609.7 L1350.6,608.2 L1350.2,606.5 L1349.9,604.7 L1349.7,602.8 L1349.5,600.8 L1349.4,598.7 L1349.3,596.5 L1349.3,594.3 L1349.4,591.9 L1349.5,589.5 L1349.7,587.1 L1349.9,584.6 L1350.2,582.1 L1350.5,579.5 L1350.9,577.0 L1351.4,574.5 L1351.9,572.0 L1352.4,569.6 L1353.0,567.2 L1353.7,564.9 L1354.3,562.6 L1355.0,560.5 L1355.8,558.4 L1356.6,556.4 L1357.3,554.6 L1358.2,552.9 L1359.0,551.3 L1359.8,549.8 L1360.7,548.5 L1361.5,547.4 L1362.4,546.4 L1363.2,545.5 L1364.1,544.9 L1364.9,544.4 L1365.7,544.1 L1366.5,543.9 L1367.3,543.9 L1368.1,544.2 L1368.8,544.5 L1369.4,545.1 L1370.1,545.8 L1370.7,546.7 L1371.2,547.8 L1371.7,549.0 L1372.2,550.3 L1372.6,551.8 L1373.0,553.5 L1373.3,555.3 L1373.5,557.2 L1373.7,559.2 L1373.8,561.3 L1373.9,563.5 L1373.9,565.7 L1373.8,568.1 L1373.7,570.5 L1373.5,572.9 L1373.3,575.4 L1373.0,577.9 L1372.7,580.5 L1372.3,583.0 L1371.8,585.5 L1371.3,588.0 L1370.8,590.4 L1370.2,592.8 L1369.5,595.1 L1368.9,597.4 L1368.2,599.5 L1367.4,601.6 L1366.6,603.6 L1365.9,605.4 L1365.0,607.1 L1364.2,608.7 L1363.4,610.2 L1362.5,611.5 L1361.7,612.6 L1360.8,613.6 L1360.0,614.5 L1359.1,615.1 L1358.3,615.6 L1357.5,615.9 L1356.7,616.1 L1355.9,616.1" fill="none" stroke="#111" stroke-width="1.2"/>
<polygon points="1299,628 1334,597.5 1337.5,601 1303,627" fill="#1ef01e"/>
<polyline points="410.0,438.0 512.0,453.0" fill="none" stroke="#ffffff" stroke-width="1.4" />
<polyline points="512.0,453.0 527.0,437.0" fill="none" stroke="#d02020" stroke-width="1" />
<polyline points="512.0,453.0 512.5,494.0" fill="none" stroke="#1414d2" stroke-width="1.3" />
<polyline points="590.0,465.0 691.0,479.0" fill="none" stroke="#ffffff" stroke-width="1.4" />
<polyline points="691.0,479.0 706.0,463.0" fill="none" stroke="#d02020" stroke-width="1" />
<polyline points="691.0,479.0 691.5,520.0" fill="none" stroke="#1414d2" stroke-width="1.3" />
<polyline points="768.0,491.5 870.0,506.0" fill="none" stroke="#ffffff" stroke-width="1.4" />
<polyline points="870.0,506.0 885.0,490.0" fill="none" stroke="#d02020" stroke-width="1" />
<polyline points="870.0,506.0 870.5,547.0" fill="none" stroke="#1414d2" stroke-width="1.3" />
<polyline points="945.8,518.2 1048.8,533.0" fill="none" stroke="#ffffff" stroke-width="1.4" />
<polyline points="1048.8,533.0 1063.8,517.0" fill="none" stroke="#d02020" stroke-width="1" />
<polyline points="1048.8,533.0 1049.3,574.0" fill="none" stroke="#1414d2" stroke-width="1.3" />
<polyline points="1125.3,543.7 1227.3,559.0" fill="none" stroke="#ffffff" stroke-width="1.4" />
<polyline points="1227.3,559.0 1242.3,543.0" fill="none" stroke="#d02020" stroke-width="1" />
<polyline points="1227.3,559.0 1227.8,600.0" fill="none" stroke="#1414d2" stroke-width="1.3" />
<polyline points="1249.4,563.3 1350.0,578.0" fill="none" stroke="#ffffff" stroke-width="1.4" />
<polyline points="1350.0,578.0 1365.0,562.0" fill="none" stroke="#d02020" stroke-width="1" />
<polyline points="1350.0,578.0 1350.5,619.0" fill="none" stroke="#1414d2" stroke-width="1.3" />
<polyline points="285.0,451.0 409.0,470.0 412.0,437.0 416.0,413.0 428.0,392.0" fill="none" stroke="#1414d2" stroke-width="1.3" />
<path d="M628,427 C627,412 620,407 614,408 C604,410 596,425 592,445 C588,470 588,500 592,515 C595,523 601,527 610,528 C617,529 622,528 625,527 L643,503 L691,512 L767,522.5 L769,492 L774,469 L786,451" fill="none" stroke="#1414d2" stroke-width="1.3"/>
<path d="M967,562 L968,576 C969,582 975,585 984,582 L1001,559 L1003,561 C1020,570 1060,590 1116,602.7 C1160,610 1230,618 1292,624.8 L1334,629.7 L1349,633 L1344,637 L1336,630 L1331,594 L1338,590" fill="none" stroke="#1414d2" stroke-width="1.3"/>
<circle cx="349" cy="461" r="2.2" fill="#1414d2"/>
<circle cx="625" cy="527" r="2.2" fill="#1414d2"/>
<circle cx="707" cy="514" r="2.2" fill="#1414d2"/>
<circle cx="984" cy="582" r="2.2" fill="#1414d2"/>
<circle cx="1116" cy="602.7" r="2.2" fill="#1414d2"/>
<circle cx="1292" cy="624.8" r="2.2" fill="#1414d2"/>
<circle cx="1334" cy="629.7" r="2.2" fill="#1414d2"/>
<circle cx="415" cy="414" r="2" fill="#1414d2"/>
<circle cx="430" cy="396" r="2" fill="#1414d2"/>
<circle cx="773" cy="470" r="2" fill="#1414d2"/>
<circle cx="787" cy="452" r="2" fill="#1414d2"/>
<rect x="201" y="98" width="1" height="759" fill="#fff"/>
<rect x="200" y="856" width="1216" height="1" fill="#fff"/>
<rect x="202" y="101" width="9" height="1" fill="#fff"/>
<rect x="202" y="112" width="9" height="1" fill="#fff"/>
<rect x="202" y="122" width="9" height="1" fill="#fff"/>
<rect x="202" y="133" width="11" height="1" fill="#fff"/>
<rect x="202" y="144" width="9" height="1" fill="#fff"/>
<rect x="202" y="155" width="9" height="1" fill="#fff"/>
<rect x="202" y="166" width="9" height="1" fill="#fff"/>
<rect x="202" y="177" width="9" height="1" fill="#fff"/>
<rect x="202" y="188" width="13" height="1" fill="#fff"/>
<rect x="202" y="199" width="9" height="1" fill="#fff"/>
<rect x="202" y="210" width="9" height="1" fill="#fff"/>
<rect x="202" y="221" width="9" height="1" fill="#fff"/>
<rect x="202" y="232" width="9" height="1" fill="#fff"/>
<rect x="202" y="243" width="11" height="1" fill="#fff"/>
<rect x="202" y="254" width="9" height="1" fill="#fff"/>
<rect x="202" y="265" width="9" height="1" fill="#fff"/>
<rect x="202" y="276" width="9" height="1" fill="#fff"/>
<rect x="202" y="287" width="9" height="1" fill="#fff"/>
<rect x="202" y="297" width="13" height="1" fill="#fff"/>
<rect x="202" y="308" width="9" height="1" fill="#fff"/>
<rect x="202" y="319" width="9" height="1" fill="#fff"/>
<rect x="202" y="330" width="9" height="1" fill="#fff"/>
<rect x="202" y="341" width="9" height="1" fill="#fff"/>
<rect x="202" y="352" width="11" height="1" fill="#fff"/>
<rect x="202" y="363" width="9" height="1" fill="#fff"/>
<rect x="202" y="374" width="9" height="1" fill="#fff"/>
<rect x="202" y="385" width="9" height="1" fill="#fff"/>
<rect x="202" y="396" width="9" height="1" fill="#fff"/>
<rect x="202" y="407" width="13" height="1" fill="#fff"/>
<rect x="202" y="418" width="9" height="1" fill="#fff"/>
<rect x="202" y="429" width="9" height="1" fill="#fff"/>
<rect x="202" y="440" width="9" height="1" fill="#fff"/>
<rect x="202" y="451" width="9" height="1" fill="#fff"/>
<rect x="202" y="462" width="11" height="1" fill="#fff"/>
<rect x="202" y="472" width="9" height="1" fill="#fff"/>
<rect x="202" y="483" width="9" height="1" fill="#fff"/>
<rect x="202" y="494" width="9" height="1" fill="#fff"/>
<rect x="202" y="505" width="9" height="1" fill="#fff"/>
<rect x="202" y="516" width="13" height="1" fill="#fff"/>
<rect x="202" y="527" width="9" height="1" fill="#fff"/>
<rect x="202" y="538" width="9" height="1" fill="#fff"/>
<rect x="202" y="549" width="9" height="1" fill="#fff"/>
<rect x="202" y="560" width="9" height="1" fill="#fff"/>
<rect x="202" y="571" width="11" height="1" fill="#fff"/>
<rect x="202" y="582" width="9" height="1" fill="#fff"/>
<rect x="202" y="593" width="9" height="1" fill="#fff"/>
<rect x="202" y="604" width="9" height="1" fill="#fff"/>
<rect x="202" y="615" width="9" height="1" fill="#fff"/>
<rect x="202" y="626" width="13" height="1" fill="#fff"/>
<rect x="202" y="637" width="9" height="1" fill="#fff"/>
<rect x="202" y="647" width="9" height="1" fill="#fff"/>
<rect x="202" y="658" width="9" height="1" fill="#fff"/>
<rect x="202" y="669" width="9" height="1" fill="#fff"/>
<rect x="202" y="680" width="11" height="1" fill="#fff"/>
<rect x="202" y="691" width="9" height="1" fill="#fff"/>
<rect x="202" y="702" width="9" height="1" fill="#fff"/>
<rect x="202" y="713" width="9" height="1" fill="#fff"/>
<rect x="202" y="724" width="9" height="1" fill="#fff"/>
<rect x="202" y="735" width="13" height="1" fill="#fff"/>
<rect x="311" y="845" width="1" height="11" fill="#fff"/>
<rect x="322" y="847" width="1" height="9" fill="#fff"/>
<rect x="333" y="847" width="1" height="9" fill="#fff"/>
<rect x="344" y="847" width="1" height="9" fill="#fff"/>
<rect x="355" y="847" width="1" height="9" fill="#fff"/>
<rect x="366" y="843" width="1" height="13" fill="#fff"/>
<rect x="377" y="847" width="1" height="9" fill="#fff"/>
<rect x="388" y="847" width="1" height="9" fill="#fff"/>
<rect x="399" y="847" width="1" height="9" fill="#fff"/>
<rect x="410" y="847" width="1" height="9" fill="#fff"/>
<rect x="420" y="845" width="1" height="11" fill="#fff"/>
<rect x="431" y="847" width="1" height="9" fill="#fff"/>
<rect x="442" y="847" width="1" height="9" fill="#fff"/>
<rect x="453" y="847" width="1" height="9" fill="#fff"/>
<rect x="464" y="847" width="1" height="9" fill="#fff"/>
<rect x="475" y="843" width="1" height="13" fill="#fff"/>
<rect x="486" y="847" width="1" height="9" fill="#fff"/>
<rect x="497" y="847" width="1" height="9" fill="#fff"/>
<rect x="508" y="847" width="1" height="9" fill="#fff"/>
<rect x="519" y="847" width="1" height="9" fill="#fff"/>
<rect x="530" y="845" width="1" height="11" fill="#fff"/>
<rect x="541" y="847" width="1" height="9" fill="#fff"/>
<rect x="552" y="847" width="1" height="9" fill="#fff"/>
<rect x="563" y="847" width="1" height="9" fill="#fff"/>
<rect x="574" y="847" width="1" height="9" fill="#fff"/>
<rect x="585" y="843" width="1" height="13" fill="#fff"/>
<rect x="595" y="847" width="1" height="9" fill="#fff"/>
<rect x="606" y="847" width="1" height="9" fill="#fff"/>
<rect x="617" y="847" width="1" height="9" fill="#fff"/>
<rect x="628" y="847" width="1" height="9" fill="#fff"/>
<rect x="639" y="845" width="1" height="11" fill="#fff"/>
<rect x="650" y="847" width="1" height="9" fill="#fff"/>
<rect x="661" y="847" width="1" height="9" fill="#fff"/>
<rect x="672" y="847" width="1" height="9" fill="#fff"/>
<rect x="683" y="847" width="1" height="9" fill="#fff"/>
<rect x="694" y="843" width="1" height="13" fill="#fff"/>
<rect x="705" y="847" width="1" height="9" fill="#fff"/>
<rect x="716" y="847" width="1" height="9" fill="#fff"/>
<rect x="727" y="847" width="1" height="9" fill="#fff"/>
<rect x="738" y="847" width="1" height="9" fill="#fff"/>
<rect x="749" y="845" width="1" height="11" fill="#fff"/>
<rect x="760" y="847" width="1" height="9" fill="#fff"/>
<rect x="770" y="847" width="1" height="9" fill="#fff"/>
<rect x="781" y="847" width="1" height="9" fill="#fff"/>
<rect x="792" y="847" width="1" height="9" fill="#fff"/>
<rect x="803" y="843" width="1" height="13" fill="#fff"/>
<rect x="814" y="847" width="1" height="9" fill="#fff"/>
<rect x="825" y="847" width="1" height="9" fill="#fff"/>
<rect x="836" y="847" width="1" height="9" fill="#fff"/>
<rect x="847" y="847" width="1" height="9" fill="#fff"/>
<rect x="858" y="845" width="1" height="11" fill="#fff"/>
<rect x="869" y="847" width="1" height="9" fill="#fff"/>
<rect x="880" y="847" width="1" height="9" fill="#fff"/>
<rect x="891" y="847" width="1" height="9" fill="#fff"/>
<rect x="902" y="847" width="1" height="9" fill="#fff"/>
<rect x="913" y="843" width="1" height="13" fill="#fff"/>
<rect x="924" y="847" width="1" height="9" fill="#fff"/>
<rect x="935" y="847" width="1" height="9" fill="#fff"/>
<rect x="945" y="847" width="1" height="9" fill="#fff"/>
<rect x="956" y="847" width="1" height="9" fill="#fff"/>
<rect x="967" y="845" width="1" height="11" fill="#fff"/>
<rect x="978" y="847" width="1" height="9" fill="#fff"/>
<rect x="989" y="847" width="1" height="9" fill="#fff"/>
<rect x="1000" y="847" width="1" height="9" fill="#fff"/>
<rect x="1011" y="847" width="1" height="9" fill="#fff"/>
<rect x="1022" y="843" width="1" height="13" fill="#fff"/>
<rect x="1033" y="847" width="1" height="9" fill="#fff"/>
<rect x="1044" y="847" width="1" height="9" fill="#fff"/>
<rect x="1055" y="847" width="1" height="9" fill="#fff"/>
<rect x="1066" y="847" width="1" height="9" fill="#fff"/>
<rect x="1077" y="845" width="1" height="11" fill="#fff"/>
<rect x="1088" y="847" width="1" height="9" fill="#fff"/>
<rect x="1099" y="847" width="1" height="9" fill="#fff"/>
<rect x="1110" y="847" width="1" height="9" fill="#fff"/>
<rect x="1120" y="847" width="1" height="9" fill="#fff"/>
<rect x="1131" y="843" width="1" height="13" fill="#fff"/>
<rect x="1142" y="847" width="1" height="9" fill="#fff"/>
<rect x="1153" y="847" width="1" height="9" fill="#fff"/>
<rect x="1164" y="847" width="1" height="9" fill="#fff"/>
<rect x="1175" y="847" width="1" height="9" fill="#fff"/>
<rect x="1186" y="845" width="1" height="11" fill="#fff"/>
<rect x="1197" y="847" width="1" height="9" fill="#fff"/>
<rect x="1208" y="847" width="1" height="9" fill="#fff"/>
<rect x="1219" y="847" width="1" height="9" fill="#fff"/>
<rect x="1230" y="847" width="1" height="9" fill="#fff"/>
<rect x="1241" y="843" width="1" height="13" fill="#fff"/>
<rect x="1252" y="847" width="1" height="9" fill="#fff"/>
<rect x="1263" y="847" width="1" height="9" fill="#fff"/>
<rect x="1274" y="847" width="1" height="9" fill="#fff"/>
<rect x="1285" y="847" width="1" height="9" fill="#fff"/>
<rect x="1295" y="845" width="1" height="11" fill="#fff"/>
<rect x="1306" y="847" width="1" height="9" fill="#fff"/>
<rect x="1317" y="847" width="1" height="9" fill="#fff"/>
<rect x="1328" y="847" width="1" height="9" fill="#fff"/>
<rect x="1339" y="847" width="1" height="9" fill="#fff"/>
<rect x="1350" y="843" width="1" height="13" fill="#fff"/>
<rect x="1361" y="847" width="1" height="9" fill="#fff"/>
<rect x="1372" y="847" width="1" height="9" fill="#fff"/>
<rect x="1383" y="847" width="1" height="9" fill="#fff"/>
<rect x="1394" y="847" width="1" height="9" fill="#fff"/>
<rect x="1405" y="845" width="1" height="11" fill="#fff"/>
<!--TRIAD-->
<g>
<path d="M253,805 L253,772" stroke="#1eb4c8" stroke-width="3.2"/>
<polygon points="246.5,773 259,773 253,759.5" fill="#1ee6f6"/>
<path d="M252.5,806 L267,790" stroke="#14d414" stroke-width="3"/>
<circle cx="266.5" cy="789.6" r="4.6" fill="#12cc12"/>
<path d="M253,805.5 L290,810" stroke="#e01818" stroke-width="3.4"/>
<polygon points="288,804 299.5,811 288.5,816.5" fill="#ee1414"/>
<path d="M249.5,749.5H255.5L249.5,757.5H256" fill="none" stroke="#a8e4f0" stroke-width="1.1"/>
<path d="M263,771L266.5,775.5L270,771M266.5,775.5V780" fill="none" stroke="#88e088" stroke-width="1"/>
<path d="M288.5,792.5L296,801M296,792.5L288.5,801" fill="none" stroke="#b03050" stroke-width="1"/>
</g>
</g></svg>
<div class="rl" style="left:217px;top:127.7px">250.0mm</div>
<div class="rl" style="left:219px;top:182.4px">200.0mm</div>
<div class="rl" style="left:217px;top:237.1px">150.0mm</div>
<div class="rl" style="left:219px;top:291.8px">100.0mm</div>
<div class="rl" style="left:217px;top:346.5px">50.0mm</div>
<div class="rl" style="left:219px;top:401.2px">0.0mm</div>
<div class="rl" style="left:217px;top:455.8px">-50.0mm</div>
<div class="rl" style="left:219px;top:510.5px">-100.0mm</div>
<div class="rl" style="left:217px;top:565.2px">-150.0mm</div>
<div class="rl" style="left:219px;top:619.9px">-200.0mm</div>
<div class="rl" style="left:217px;top:674.6px">-250.0mm</div>
<div class="rl" style="left:219px;top:729.3px">-300.0mm</div>
<div class="rl" style="left:338.1px;top:830.5px">500.0mm</div>
<div class="rl" style="left:447.4px;top:830.5px">600.0mm</div>
<div class="rl" style="left:556.8px;top:830.5px">700.0mm</div>
<div class="rl" style="left:666.2px;top:830.5px">800.0mm</div>
<div class="rl" style="left:775.5px;top:830.5px">900.0mm</div>
<div class="rl" style="left:881.9px;top:830.5px">1000.0mm</div>
<div class="rl" style="left:991.2px;top:830.5px">1100.0mm</div>
<div class="rl" style="left:1100.6px;top:830.5px">1200.0mm</div>
<div class="rl" style="left:1210.0px;top:830.5px">1300.0mm</div>
<div class="rl" style="left:1319.3px;top:830.5px">1400.0mm</div>
<div class="t" style="left:265px;top:126px;font-size:16px;line-height:18px;color:#dcdba4;transform-origin:0 0;transform:scaleX(0.965)">Sample 5in Pipe (mm)</div>

<!-- right toolbar -->
<div class="griph" style="left:1427px;top:101px;width:32px"></div>
<svg class="a" style="left:1428px;top:115px" width="25" height="24" viewBox="0 0 25 24"><path d="M6,2.5H20M6.5,2.5V16M9,18.5H22.5M22.5,5V18.5" stroke="#1a1a9c" stroke-width="1.2" fill="none"/><polygon points="6.5,2.5 4.5,6 8.5,6" fill="#1a1a9c"/><polygon points="6.5,16 4.5,12.5 8.5,12.5" fill="#1a1a9c"/><polygon points="9,18.5 12.5,16.5 12.5,20.5" fill="#1a1a9c"/><polygon points="22.5,18.5 19,16.5 19,20.5" fill="#1a1a9c"/><rect x="21" y="0" width="3" height="3" fill="#d02030"/></svg>
<svg class="a" style="left:1428px;top:129px" width="10" height="10" viewBox="0 0 10 10"><polygon points="0.8,0.8 0.8,8.5 8.8,8.5" fill="#fff" stroke="#000" stroke-width="1.1"/></svg>
<svg class="a" style="left:1428px;top:149px" width="25" height="24" viewBox="0 0 25 24"><path d="M9.5,13.5L21,2" stroke="#b8283c" stroke-width="1.1"/><rect x="8" y="12" width="3.2" height="3.2" fill="#000"/><rect x="18.5" y="2" width="3.2" height="3.2" fill="#000"/></svg>
<svg class="a" style="left:1428px;top:163px" width="10" height="10" viewBox="0 0 10 10"><polygon points="0.8,0.8 0.8,8.5 8.8,8.5" fill="#fff" stroke="#000" stroke-width="1.1"/></svg>
<svg class="a" style="left:1428px;top:183px" width="25" height="24" viewBox="0 0 25 24"><circle cx="13.5" cy="9.5" r="7" fill="none" stroke="#b8283c" stroke-width="1.1"/><rect x="11.5" y="7.5" width="3" height="3" fill="#000"/><path d="M13,9 L18,14" stroke="#1a1a9c" stroke-width="1.3"/><polygon points="19,15 15.5,14.5 18.5,11.5" fill="#1a1a9c"/></svg>
<svg class="a" style="left:1428px;top:197px" width="10" height="10" viewBox="0 0 10 10"><polygon points="0.8,0.8 0.8,8.5 8.8,8.5" fill="#fff" stroke="#000" stroke-width="1.1"/></svg>
<svg class="a" style="left:1428px;top:217px" width="25" height="24" viewBox="0 0 25 24"><path d="M4.5,22.5 V19.5 C4.5,17.5 9,17.5 9,15 V6 C9,2 11,0.8 13.5,0.8 C16,0.8 18,2 18,6 V15 C18,17.5 22.5,17.5 22.5,19.5 V22.5 Z" fill="none" stroke="#b8283c" stroke-width="1.1"/></svg>
<svg class="a" style="left:1428px;top:231px" width="10" height="10" viewBox="0 0 10 10"><polygon points="0.8,0.8 0.8,8.5 8.8,8.5" fill="#fff" stroke="#000" stroke-width="1.1"/></svg>
<svg class="a" style="left:1428px;top:252px" width="25" height="24" viewBox="0 0 25 24"><polygon points="14,1 21.5,5 21.5,14 14,18.5 6.5,14 6.5,5" fill="#c8c8c8" stroke="#000" stroke-width="0.9"/><polygon points="14,9.5 21.5,5 21.5,14 14,18.5" fill="#8a8a8a"/><polygon points="6.5,5 14,1 21.5,5 14,9.5" fill="#e4e4e4"/></svg>
<svg class="a" style="left:1428px;top:265px" width="10" height="10" viewBox="0 0 10 10"><polygon points="0.8,0.8 0.8,8.5 8.8,8.5" fill="#fff" stroke="#000" stroke-width="1.1"/></svg>
<svg class="a" style="left:1428px;top:286px" width="25" height="24" viewBox="0 0 25 24"><path d="M22,2 V8 C22,16 16,21 8,21.5" fill="none" stroke="#d03040" stroke-width="1.1"/><path d="M6.5,3 V8 M6.5,4.5 C7,3 8,3 9,3.5" stroke="#1a1a9c" stroke-width="1.1" fill="none"/><path d="M10,6.5 L18,14" stroke="#1a1a9c" stroke-width="1.3"/><polygon points="19,15 15,14.5 18.5,11" fill="#1a1a9c"/></svg>
<svg class="a" style="left:1428px;top:300px" width="10" height="10" viewBox="0 0 10 10"><polygon points="0.8,0.8 0.8,8.5 8.8,8.5" fill="#fff" stroke="#000" stroke-width="1.1"/></svg>
<svg class="a" style="left:1428px;top:320px" width="25" height="24" viewBox="0 0 25 24"><path d="M9,7.5 C9,3 11.5,1.5 14,1.5 C17,1.5 19,3.5 19,6 C19,9 15,10 15,13.5" fill="none" stroke="#000" stroke-width="4.2" stroke-linecap="round"/><path d="M9,7.5 C9,3 11.5,1.5 14,1.5 C17,1.5 19,3.5 19,6 C19,9 15,10 15,13.5" fill="none" stroke="#f4f000" stroke-width="2.4" stroke-linecap="round"/><circle cx="15" cy="18" r="2.3" fill="#f4f000" stroke="#000" stroke-width="1"/></svg>
<svg class="a" style="left:1428px;top:334px" width="10" height="10" viewBox="0 0 10 10"><polygon points="0.8,0.8 0.8,8.5 8.8,8.5" fill="#fff" stroke="#000" stroke-width="1.1"/></svg>
<svg class="a" style="left:1428px;top:354px" width="25" height="24" viewBox="0 0 25 24"><polygon points="15,3 22,5 23,17 16,19.5" fill="#8c8c8c" stroke="#000" stroke-width="0.8"/><polygon points="3,1.5 16,4 16.5,20 5,16.5" fill="#c8c8c8" stroke="#333" stroke-width="0.9"/><polygon points="5.5,4.5 13.5,6.5 14,16.5 7,14" fill="#1010e8" stroke="#fff" stroke-width="0.7"/></svg>
<svg class="a" style="left:1428px;top:368px" width="10" height="10" viewBox="0 0 10 10"><polygon points="0.8,0.8 0.8,8.5 8.8,8.5" fill="#fff" stroke="#000" stroke-width="1.1"/></svg>
<svg class="a" style="left:1428px;top:388px" width="25" height="24" viewBox="0 0 25 24"><path d="M7.5,5.5 H16.5 V15.5 H7.5 Z M12,1.5 H21 V11.5 H12 Z M7.5,5.5 L12,1.5 M16.5,5.5 L21,1.5 M16.5,15.5 L21,11.5 M7.5,15.5 L12,11.5" fill="none" stroke="#000" stroke-width="1.1"/></svg>
<svg class="a" style="left:1428px;top:402px" width="10" height="10" viewBox="0 0 10 10"><polygon points="0.8,0.8 0.8,8.5 8.8,8.5" fill="#fff" stroke="#000" stroke-width="1.1"/></svg>
<svg class="a" style="left:1428px;top:422px" width="25" height="24" viewBox="0 0 25 24"><circle cx="13" cy="12" r="5.5" fill="#1a1a9c" stroke="#1a1a9c"/><path d="M13,6.5 V12 H7.5 M13,12 H18.5 M13,12 V17.5" stroke="#fff" stroke-width="0.9"/><path d="M13,4 V20 M5,12 H21" stroke="#000" stroke-width="1.1"/><path d="M19,2 l1,2 l2,-1 l-1,2 l2,1 l-2,1" stroke="#d8c020" stroke-width="0.8" fill="none"/></svg>
<svg class="a" style="left:1428px;top:436px" width="10" height="10" viewBox="0 0 10 10"><polygon points="0.8,0.8 0.8,8.5 8.8,8.5" fill="#fff" stroke="#000" stroke-width="1.1"/></svg>
<svg class="a" style="left:1428px;top:456px" width="25" height="24" viewBox="0 0 25 24"><path d="M7,22 V3" stroke="#1a1a9c" stroke-width="1.1"/><polygon points="7,0.5 4.5,4.5 9.5,4.5" fill="#1a1a9c"/><path d="M11,2 V8.5 H22 V2 H20 V4.5 H13 V2 Z" fill="none" stroke="#c04050" stroke-width="1.1"/><path d="M11,12.5 V19.5 H22 V12.5 H20 V16 H13 V12.5 Z" fill="none" stroke="#1a1a9c" stroke-width="1.1"/></svg>
<svg class="a" style="left:1428px;top:470px" width="10" height="10" viewBox="0 0 10 10"><polygon points="0.8,0.8 0.8,8.5 8.8,8.5" fill="#fff" stroke="#000" stroke-width="1.1"/></svg>
<svg class="a" style="left:1428px;top:490px" width="25" height="24" viewBox="0 0 25 24"><path d="M5,5 H21" stroke="#208a30" stroke-width="1"/><polygon points="20,2.5 24,5 20,7.5" fill="#208a30"/><path d="M5,15 H19" stroke="#208a30" stroke-width="1.2"/><polygon points="18,10.5 24.5,15 18,19.5" fill="#0a9a20"/><text x="5" y="13.5" font-family="Liberation Sans" font-size="11" fill="#b03040" letter-spacing="-0.5">10</text><path d="M8,2 l2,2 M10,2 l-2,2" stroke="#b03040" stroke-width="0.8"/></svg>
<svg class="a" style="left:1428px;top:504px" width="10" height="10" viewBox="0 0 10 10"><polygon points="0.8,0.8 0.8,8.5 8.8,8.5" fill="#fff" stroke="#000" stroke-width="1.1"/></svg>
<svg class="a" style="left:1428px;top:524px" width="25" height="24" viewBox="0 0 25 24"><rect x="8" y="2" width="7" height="13" fill="#fff" stroke="#000" stroke-width="0.9"/><rect x="6" y="4" width="7" height="13" fill="#fff" stroke="#000" stroke-width="0.9"/><rect x="4" y="6" width="7" height="13" fill="#f0f060" stroke="#000" stroke-width="0.9"/><path d="M16.5,2 V6 C16.5,8 18,8.5 18,9 V19 H21.5 V9 C21.5,8.5 23,8 23,6 V2 L21.5,2 V5.5 H18 V2 Z" fill="#c0c0c0" stroke="#000" stroke-width="0.9"/></svg>
<svg class="a" style="left:1428px;top:538px" width="10" height="10" viewBox="0 0 10 10"><polygon points="0.8,0.8 0.8,8.5 8.8,8.5" fill="#fff" stroke="#000" stroke-width="1.1"/></svg>
<svg class="a" style="left:1428px;top:558px" width="25" height="24" viewBox="0 0 25 24"><path d="M6,5.5 H21 A2.5,6 0 0 1 21,17.5 H6 Z" fill="url(#tubeg)" stroke="#000" stroke-width="1"/><ellipse cx="21.5" cy="14" rx="2" ry="2.5" fill="none" stroke="#000" stroke-width="0.9"/><defs><linearGradient id="tubeg" x1="0" y1="0" x2="0" y2="1"><stop offset="0" stop-color="#e6e6e6"/><stop offset="0.5" stop-color="#9a9a9a"/><stop offset="1" stop-color="#5a5a5a"/></linearGradient></defs></svg>
<svg class="a" style="left:1428px;top:572px" width="10" height="10" viewBox="0 0 10 10"><polygon points="0.8,0.8 0.8,8.5 8.8,8.5" fill="#fff" stroke="#000" stroke-width="1.1"/></svg>
<svg class="a" style="left:1428px;top:592px" width="25" height="24" viewBox="0 0 25 24"><path d="M2.5,8 L4,6.5 H8 L9.5,8 H16 V20 H2.5 Z" fill="#98e698" stroke="#000" stroke-width="0.9"/><path d="M3,20.5 L8.5,12.5 H24 L18,20.5 Z" fill="#1aa83a" stroke="#000" stroke-width="1"/><path d="M14,4.5 C15,1.5 18,1 20,3.5" fill="none" stroke="#000" stroke-width="1.3"/><polygon points="18,5 23,2.5 22,7.5" fill="#000"/></svg>
<svg class="a" style="left:1428px;top:606px" width="10" height="10" viewBox="0 0 10 10"><polygon points="0.8,0.8 0.8,8.5 8.8,8.5" fill="#fff" stroke="#000" stroke-width="1.1"/></svg>
<svg class="a" style="left:1428px;top:626px" width="25" height="24" viewBox="0 0 25 24"><polygon points="14,1 16.8,8.2 24,8.6 18.4,13.6 20.4,21.5 14,17 7.6,21.5 9.6,13.6 4,8.6 11.2,8.2" fill="#f6f000" stroke="#000" stroke-width="1.1" stroke-linejoin="round"/></svg>
<svg class="a" style="left:1428px;top:640px" width="10" height="10" viewBox="0 0 10 10"><polygon points="0.8,0.8 0.8,8.5 8.8,8.5" fill="#fff" stroke="#000" stroke-width="1.1"/></svg>
<svg class="a" style="left:1428px;top:660px" width="25" height="24" viewBox="0 0 25 24"><path d="M8,12 C8,7 11,5 15,5" fill="none" stroke="#e01020" stroke-width="3.2"/><circle cx="17.5" cy="6.5" r="5" fill="#fff" stroke="#000" stroke-width="1"/><circle cx="8" cy="15.5" r="5" fill="#fff" stroke="#000" stroke-width="1"/><path d="M14.5,18 H24 M19.2,13.5 V22.5" stroke="#1616a0" stroke-width="2"/></svg>
<svg class="a" style="left:1428px;top:674px" width="10" height="10" viewBox="0 0 10 10"><polygon points="0.8,0.8 0.8,8.5 8.8,8.5" fill="#fff" stroke="#000" stroke-width="1.1"/></svg>
<svg class="a" style="left:1428px;top:694px" width="25" height="24" viewBox="0 0 25 24"><path d="M3,22.5 C8,17.5 12,16 16,17 C19,17.5 21,19 24,19.5 V22.5 Z" fill="#b8b8b8"/><path d="M15,16 V18" stroke="#c02030" stroke-width="1"/><path d="M4,1 H11 V4 H10 V7 H14 V10 H17 V16 H13 V12 H9 V9 H6 V4 H4 Z" fill="#c8c8c8" stroke="#000" stroke-width="0.9"/><polygon points="18,1 22.5,4.5 18,8" fill="#10b030"/></svg>
<svg class="a" style="left:1428px;top:708px" width="10" height="10" viewBox="0 0 10 10"><polygon points="0.8,0.8 0.8,8.5 8.8,8.5" fill="#fff" stroke="#000" stroke-width="1.1"/></svg>
<div class="hl" style="left:1421px;top:724px;width:42px"></div>
<div class="hl" style="left:1421px;top:860px;width:43px"></div>

<!-- status -->
<div class="a" style="left:454px;top:865px;width:795px;height:15px;background:#ffff00"></div>
<div class="t" style="left:455px;top:866px">Sample 5in Pipe (mm)</div>
<div class="vl" style="left:1250px;top:862px;height:41px;background:#d8d8d8"></div>
<div class="t" style="left:1254px;top:866px">Figure -Top</div>
<div class="hl" style="left:1px;top:881px;width:1463px;background:#e6e6e6"></div>
<div class="t" style="left:660px;top:886px">Layer -0</div>
<div class="vl" style="left:807px;top:883px;height:19px;background:#d8d8d8"></div>
<div class="t" style="left:830px;top:886px">- 0</div>
<div class="vl" style="left:1142px;top:883px;height:19px;background:#d8d8d8"></div>
<div class="vl" style="left:1356px;top:883px;height:19px;background:#d8d8d8"></div>
<svg class="a" style="left:613px;top:885px" width="42" height="15"><rect width="42" height="15" fill="#000"/><path d="M2,5.5H40" stroke="#a8c8a0" stroke-width="1.2" stroke-dasharray="3.5 2.5"/><path d="M2,10.5H40" stroke="#fff" stroke-width="1.3"/></svg>
<svg class="a" style="left:812px;top:884px" width="16" height="18"><path d="M3.5,12V3" stroke="#000" stroke-width="1.6"/><polygon points="3.5,0.5 0.5,4.5 6.5,4.5" fill="#000"/><path d="M3.5,11.5L11,7" stroke="#000" stroke-width="1.4"/><polygon points="13,5 8,5.5 11.5,9.5" fill="#000"/><path d="M3.5,11.5L11,15.5" stroke="#000" stroke-width="1.4"/><polygon points="13,17.5 8,17 12,13" fill="#000"/></svg>
<div class="a" style="left:990px;top:886px;width:18px;height:14px;background:#cce4f7;border:1px solid #2f6a9a"></div>
<div class="t" style="left:991px;top:886px;font-size:12.5px;line-height:14px;color:#1a2a4a;letter-spacing:-0.6px">XY</div>
<div class="a" style="left:1010px;top:886px;width:18px;height:14px;background:#e1e1e1;border:1px solid #b4b4b4"></div>
<div class="t" style="left:1011px;top:886px;font-size:12.5px;line-height:14px;color:#222;letter-spacing:-0.6px">XZ</div>
<div class="a" style="left:1030px;top:886px;width:18px;height:14px;background:#e1e1e1;border:1px solid #b4b4b4"></div>
<div class="t" style="left:1031px;top:886px;font-size:12.5px;line-height:14px;color:#222;letter-spacing:-0.6px">YZ</div>
<div class="t" style="left:1061px;top:886px;font-size:11.5px;line-height:14px">z</div>
<div class="a" style="left:1069px;top:886px;width:50px;height:14px;background:#fff;border:1px solid #7a7a7a"></div>
<div class="t" style="left:1083px;top:886px;font-size:12px;line-height:14px;color:#222">0.000</div>
<div class="a" style="left:1122px;top:886px;width:18px;height:14px;background:#e1e1e1;border:1px solid #b4b4b4"></div>
<div class="t" style="left:1124px;top:885px;font-size:11px;line-height:14px;color:#222;letter-spacing:-0.5px">&gt; &gt;</div>
<svg class="a" style="left:1452px;top:890px" width="10" height="10"><g fill="#b8b8b8"><rect x="7" y="1" width="2" height="2"/><rect x="4" y="4" width="2" height="2"/><rect x="7" y="4" width="2" height="2"/><rect x="1" y="7" width="2" height="2"/><rect x="4" y="7" width="2" height="2"/><rect x="7" y="7" width="2" height="2"/></g></svg>

</body></html>
